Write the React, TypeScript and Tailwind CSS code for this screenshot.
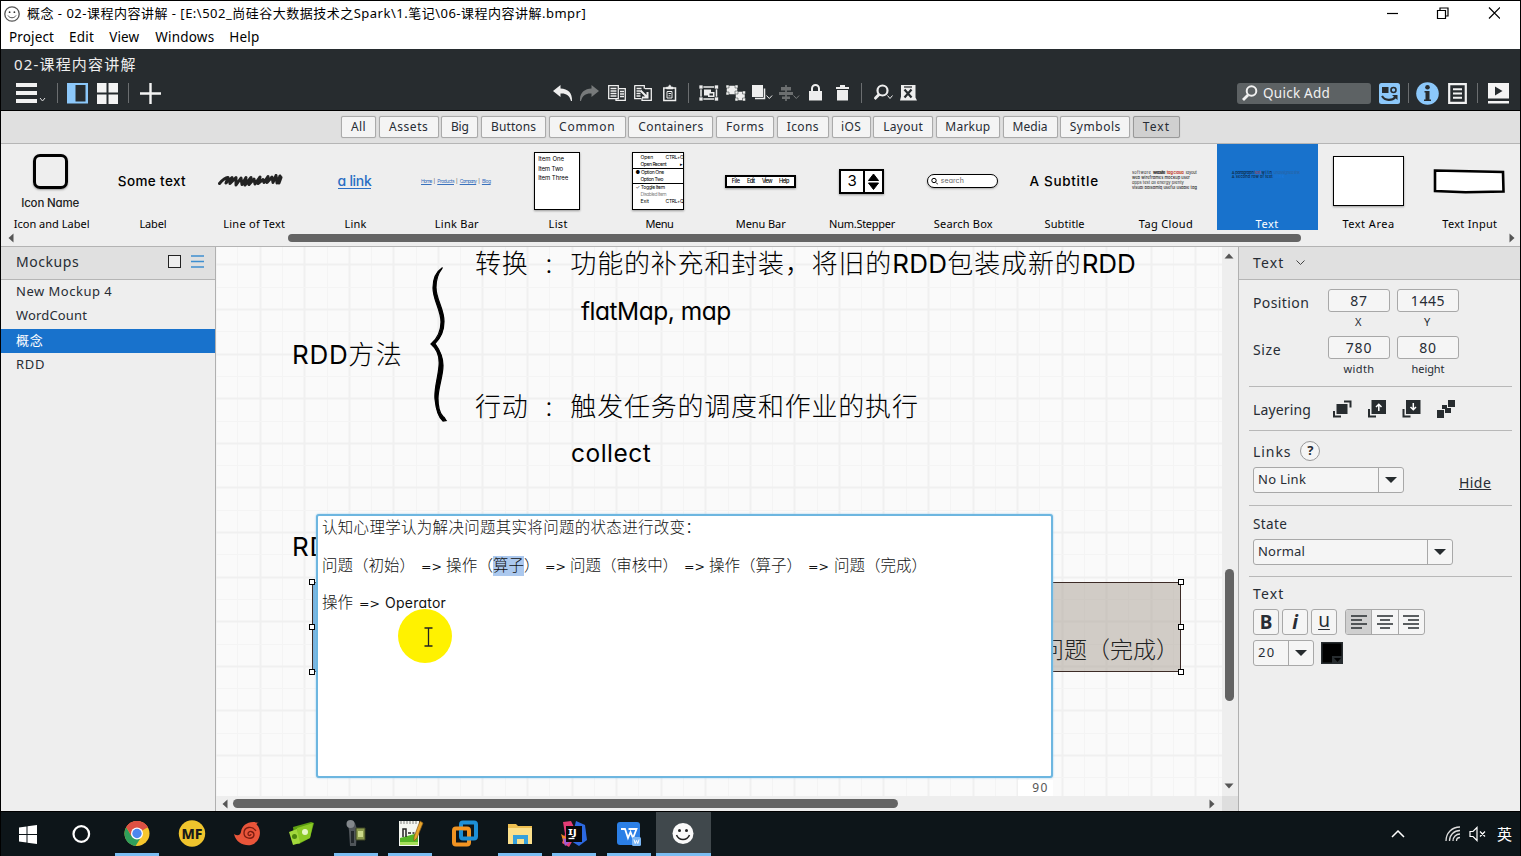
import React, { useLayoutEffect, useRef, useState } from "react";

/* Text run whose letter spacing is computed so that it fills the given width. */
function Run({ w, className = "", children }: { w: number; className?: string; children: string }) {
  const ref = useRef<HTMLSpanElement>(null);
  const [ls, setLs] = useState(0);
  useLayoutEffect(() => {
    const el = ref.current;
    if (!el) return;
    const natural = el.getBoundingClientRect().width - ls * children.length;
    setLs((w - natural) / Math.max(1, children.length - 0.5));
  }, [w, children]);
  return (
    <span ref={ref} className={`inline-block w-fit shrink-0 whitespace-pre ${className}`} style={{ letterSpacing: `${ls}px` }}>
      {children}
    </span>
  );
}

const sketch = "font-['Inter','Noto_Sans_CJK_SC',sans-serif] [font-feature-settings:'cv11','calt'_0]";

/* ---------- Title bar ---------- */
function TitleBar() {
  return (
    <div className="flex h-[48px] flex-col bg-white text-black">
      <div className="flex h-[26px] items-center">
        <svg width="16" height="16" viewBox="0 0 16 16" className="ml-[3px]" fill="none" stroke="#555">
          <circle cx="8" cy="8" r="7.2" strokeWidth="1.3" />
          <circle cx="5.6" cy="6.2" r=".9" fill="#333" stroke="none" />
          <circle cx="10.4" cy="6.2" r=".9" fill="#333" stroke="none" />
          <path d="M4 9.5c1.6 3 6.400 3 8 0" />
        </svg>
        <Run w={559} className="ml-[7px] text-[13px]">概念 - 02-课程内容讲解 - [E:\502_尚硅谷大数据技术之Spark\1.笔记\06-课程内容讲解.bmpr]</Run>
        <svg width="114" height="14" viewBox="0 0 114 14" className="mr-[20px] mb-[2px] ml-auto" fill="none" stroke="#000" strokeWidth="1.200">
          <path d="M1 7.500h11" />
          <path d="M51.500 4.500h8v8h-8zM54 4.500v-2.500h8v8h-2.500" />
          <path d="M103 1.500l11 11M114 1.500l-11 11" />
        </svg>
      </div>
      <div className="flex h-[21px] items-center pl-[8px] text-[13.500px]">
        <Run w={45}>Project</Run>
        <Run w={25} className="ml-[15px]">Edit</Run>
        <Run w={30} className="ml-[15px]">View</Run>
        <Run w={59} className="ml-[16px]">Windows</Run>
        <Run w={30} className="ml-[15px]">Help</Run>
      </div>
    </div>
  );
}

/* ---------- Dark tool bar ---------- */
const Sep = ({ className = "" }: { className?: string }) => <div className={`h-[20px] w-px bg-[#6b6e70] ${className}`} />;

function Tool({ w, className = "", children }: { w: number; className?: string; children: React.ReactNode }) {
  return (
    <svg width={w} height="18" viewBox={`0 0 ${w} 18`} className={`shrink-0 ${className}`} fill="none" stroke="#eee" strokeWidth="1.500">
      {children}
    </svg>
  );
}

function ToolBar() {
  return (
    <div className="flex h-[61px] flex-col bg-[#272c2f] text-white">
      <div className="flex h-[31px] items-center pl-[13px] text-[15px] text-[#eee]">
        <Run w={122}>02-课程内容讲解</Run>
      </div>
      <div className="flex h-[26px] items-center pl-[15px]">
        <svg width="30" height="21" viewBox="0 0 30 21">
          <path d="M0 0h21v4H0zM0 8h21v4H0zM0 16h21v4H0z" fill="#f1f1f1" />
          <path d="M24 15l2.500 3 2.500-3" fill="none" stroke="#ddd" />
        </svg>
        <Sep className="ml-[11px]" />
        <svg width="21" height="21" viewBox="0 0 21 21" className="ml-[9px]">
          <path d="M0 0h21v20.500H0z" fill="#8cc8fa" />
          <path d="M8.500 2h10v16.500h-10z" fill="#272c2f" />
        </svg>
        <svg width="21" height="21" viewBox="0 0 21 21" className="ml-[9px]">
          <path d="M0 0h9.500v9.500H0zM11.500 0H21v9.500h-9.500zM0 11.500h9.500V21H0zM11.500 11.500H21V21h-9.500z" fill="#f4f4f4" />
        </svg>
        <Sep className="ml-[10px]" />
        <svg width="21" height="21" viewBox="0 0 21 21" className="ml-[11px]">
          <path d="M9.300 0h2.400v9.300H21v2.400h-9.300V21H9.300v-9.300H0V9.300h9.300z" fill="#f4f4f4" />
        </svg>
        <div className="ml-[392px] flex items-center">
          <Tool w={20}><path d="M7.500 1L0 7l7.500 6V9.500c5-.5 9 1.500 10.500 7.500h1C19.500 9 15 4.800 7.500 4.500z" fill="#eee" stroke="none" /></Tool>
          <Tool w={20} className="ml-[7px]"><path d="M11.500 1L19 7l-7.500 6V9.500C6.500 9 2.500 11 1 17H0C-.5 9 4 4.800 11.500 4.500z" fill="#777a7b" stroke="none" /></Tool>
          <Tool w={18} className="ml-[8px]">
            <path d="M.7 1.700h9.600v13H.7zM11 4.700h6.300v11.600H8V15M2.500 4.500h6M2.500 7h6M2.500 9.500h6M2.500 12h6M12 7.500h4M12 10h4M12 12.500h4" strokeWidth="1.300" />
          </Tool>
          <Tool w={18} className="ml-[8px]">
            <path d="M.7 1.700h9.600v3M.7 1.200v13.500H7M2.500 4.500h5M2.500 7h4M2.500 9.500h4M2.500 12h4M11 4.700h6.300v11.600H8V14" strokeWidth="1.300" />
            <path d="M6.500 6.500l6 6M13.500 8v5.500H8" strokeWidth="2" />
          </Tool>
          <Tool w={14} className="ml-[11px]">
            <path d="M.8 4h11.700v12.500H.8z" /><path d="M3.500 5V3h2c0-2.500 2.500-2.500 2.500 0h2v2z" fill="#eee" strokeWidth=".5" />
            <path d="M4 7.500h5v6.500H4zM5.500 9.500h2.500M5.500 11.800h2" strokeWidth="1" />
          </Tool>
          <Sep className="ml-[11px]" />
          <Tool w={20} className="ml-[10px]">
            <path d="M2 3h15.500v12H2z" />
            <path d="M0 1h4v4H0zM15.500 1h4v4h-4zM0 13h4v4H0zM15.500 13h4v4h-4z" fill="#eee" stroke="#272c2f" strokeWidth=".7" />
            <path d="M5 5.500h7V8h3.500v5H9v-1.500H5z" fill="#eee" stroke="none" /><path d="M10.500 9.500h3.500v2h-3.500z" fill="#272c2f" stroke="none" />
          </Tool>
          <Tool w={20} className="ml-[7px]">
            <path d="M1.500 2.500h9v7h-9zM10.500 8.500h7.500v7h-7.500z" fill="#eee" />
            <path d="M0 1h3v3H0zM9 1h3v3H9zM0 8h3v3H0zM9 7h3v3H9zM16.500 7h3v3h-3zM9 14h3v3H9zM16.500 14h3v3h-3z" fill="#eee" stroke="#272c2f" strokeWidth=".5" />
          </Tool>
          <Tool w={21} className="ml-[6px]">
            <path d="M0 1h11v12H0z" fill="#eee" stroke="none" /><path d="M12.500 4.500v10H3" /><path d="M14.500 11.500l2.800 3 2.800-3" strokeWidth="1" />
          </Tool>
          <Tool w={21} className="ml-[6px]">
            <path d="M7 1v16" stroke="#777a7b" /><path d="M2 3h10v3.500H2zM0 8h14v3H0zM3 12.500h8V15H3z" fill="#6c6f70" stroke="none" /><path d="M14.500 11.500l2.800 3 2.800-3" strokeWidth="1" stroke="#777a7b" />
          </Tool>
          <Tool w={13} className="ml-[9px]">
            <path d="M3 8V4.500a3.500 3.500 0 017 0V8" strokeWidth="2" /><path d="M0 7h13v9.500H0z" fill="#eee" stroke="none" />
          </Tool>
          <Tool w={13} className="ml-[14px]">
            <path d="M0 3h4V1h5v2h4v2H0zM1 6h11v10.500H1z" fill="#eee" stroke="none" />
          </Tool>
          <Sep className="ml-[12px]" />
          <Tool w={20} className="ml-[12px]">
            <circle cx="8.500" cy="6.500" r="5" strokeWidth="2.200" /><path d="M5.500 10l-5 5" strokeWidth="3" /><path d="M13.500 11.500l2.500 3 2.500-3" strokeWidth="1" />
          </Tool>
          <Tool w={17} className="ml-[6px]">
            <path d="M1 1h14.500v12.500l1.500 3H0l1-4z" fill="#eee" stroke="none" /><path d="M4.500 5.500l7 8M11.500 5.500l-7 8" stroke="#272c2f" strokeWidth="2.200" /><path d="M4 3h8" stroke="#272c2f" strokeWidth="1.300" />
          </Tool>
        </div>
        <div className="mr-[11px] ml-auto flex items-center">
          <div className="flex h-[21px] w-[134px] items-center rounded-[3px] bg-[#5d6264] pl-[5px] text-[13.500px] text-[#f1f1f1]">
            <svg width="16" height="16" viewBox="0 0 16 16" fill="none" stroke="#f1f1f1"><circle cx="9.500" cy="6" r="4.800" strokeWidth="2" /><path d="M6 10l-5 5" strokeWidth="2.800" /></svg>
            <Run w={67} className="ml-[5px]">Quick Add</Run>
          </div>
          <svg width="21" height="21" viewBox="0 0 21 21" className="ml-[8px]">
            <rect width="21" height="21" rx="2.500" fill="#8cc8fa" />
            <path d="M3 4h6.500v6H3z" fill="#272c2f" /><circle cx="14.500" cy="7" r="2.500" fill="none" stroke="#272c2f" strokeWidth="1.600" />
            <path d="M3 13c3 5 10 5 13.500 1" fill="none" stroke="#272c2f" strokeWidth="2.200" /><path d="M13 12h5.500v5z" fill="#272c2f" />
          </svg>
          <Sep className="ml-[8px]" />
          <svg width="23" height="23" viewBox="0 0 23 23" className="ml-[7px]">
            <circle cx="11.500" cy="11.500" r="11.300" fill="#8cc8fa" /><circle cx="11.500" cy="5.200" r="2.300" fill="#272c2f" /><path d="M8.500 9h5v8.500h1.500v1.500h-7v-1.500h1.500v-7H8.500z" fill="#272c2f" />
          </svg>
          <svg width="19" height="21" viewBox="0 0 19 21" className="ml-[9px]">
            <path d="M1.200 1.200h16.600v18.600H1.200z" fill="none" stroke="#f1f1f1" strokeWidth="2.200" /><path d="M5 6.200h9M5 10.500h9M5 14.800h9" stroke="#f1f1f1" strokeWidth="2" />
          </svg>
          <Sep className="ml-[10px]" />
          <svg width="21" height="21" viewBox="0 0 21 21" className="ml-[10px]">
            <path d="M0 0h21v15.500H0zM0 18h21v2.500H0z" fill="#f4f4f4" /><path d="M7 3.500l7.500 4.500L7 12.500z" fill="#272c2f" />
          </svg>
        </div>
      </div>
    </div>
  );
}

/* ---------- Category buttons ---------- */
const categories: [string, string, number][] = [
  ["All", "w-[35px]", 15], ["Assets", "w-[60px]", 39], ["Big", "w-[37px]", 18], ["Buttons", "w-[65px]", 45],
  ["Common", "w-[77px]", 56], ["Containers", "w-[85px]", 65], ["Forms", "w-[58px]", 38], ["Icons", "w-[52px]", 32],
  ["iOS", "w-[39px]", 20], ["Layout", "w-[60px]", 40], ["Markup", "w-[64px]", 45], ["Media", "w-[55px]", 35],
  ["Symbols", "w-[70px]", 51], ["Text", "w-[47px]", 27],
];

function CategoryBar() {
  return (
    <div className="flex h-[34px] items-center justify-center gap-[2.700px] border-t border-b border-t-black border-b-[#b5b5b5] bg-[#e0e0e0] text-[12px] text-[#272c34]">
      {categories.map(([name, w, tw]) => (
        <div key={name} className={`flex h-[22px] items-center justify-center rounded-[2px] border shadow-[0_0_1px_#aaa] ${w} ${name === "Text" ? "border-[#999] bg-[#d0d0d0]" : "border-[#aaa] bg-[#f4f4f4]"}`}>
          <Run w={tw}>{name}</Run>
        </div>
      ))}
    </div>
  );
}

/* ---------- Component shelf ---------- */
const previews: Record<string, React.ReactNode> = {
  "Icon and Label": (
    <div className="mr-[3px] flex flex-col items-center pt-[2px]">
      <div className="size-[35px] rounded-[7px] border-[3px] border-black shadow-[0_1px_2px_#999]" />
      <Run w={58} className="mt-[6px] text-[11.500px] leading-[16px] font-medium text-[#222]">Icon Name</Run>
    </div>
  ),
  Label: <Run w={68} className="mr-[2px] text-[13.500px] font-medium text-black">Some text</Run>,
  "Line of Text": (
    <svg width="70" height="14" viewBox="0 0 70 14" className="-ml-[3px]" fill="none" stroke="#222" strokeWidth="3" strokeLinecap="round" strokeLinejoin="round">
      <path d="M1.500 9.500Q7 3 10 3.500L8 9l6-5.500-2 6 6-6v7.500l5-7 1 6.500 4-7-1 7.500 6-7.500-2 7 5-5.500 1 5 5-7-2 6.500 5-4 1 3 4-6-1 6 5-5.500 1 5.500 3-7 1 7.500 3-7-1 7 2-5.500" />
    </svg>
  ),
  Link: <Run w={34} className="mr-[2px] border-b border-[#2a6fc4] text-[14px] leading-[15px] font-medium text-[#2a6fc4]">a link</Run>,
  "Link Bar": (
    <div className="mr-[2px] flex gap-[2px] text-[5px] leading-[6px] text-[#3a72bd]">
      {["Home", "Products", "Company", "Blog"].map((t, i) => (
        <React.Fragment key={t}>{i > 0 && <span className="text-[#444]">|</span>}<Run w={[11, 17, 17, 9][i]} className="underline">{t}</Run></React.Fragment>
      ))}
    </div>
  ),
  List: (
    <div className="mr-[2px] flex h-[58px] w-[46px] flex-col border-[1.500px] border-black bg-white pt-[1px] pl-[3px] text-[6px] leading-[9.500px] text-black shadow-[0_1px_2px_#999]">
      <Run w={26}>Item One</Run><Run w={25}>Item Two</Run><Run w={30}>Item Three</Run>
    </div>
  ),
  Menu: (
    <div className="mr-[2px] flex h-[58px] w-[52px] flex-col border-[1.500px] border-black bg-white pt-px text-[5px] leading-[7px] text-black shadow-[0_1px_2px_#999]">
      <div className="flex justify-between pl-[7px]"><span>Open</span><Run w={18}>CTRL+O</Run></div>
      <div className="flex justify-between border-b border-black pl-[7px]"><Run w={26}>Open Recent</Run><span>▸</span></div>
      <div className="flex gap-px pl-[2px]"><span>●</span><Run w={23}>Option One</Run></div>
      <div className="flex border-b border-black pl-[7px]"><Run w={23}>Option Two</Run></div>
      <div className="flex gap-px pl-[2px]"><span>✓</span><Run w={24}>Toggle Item</Run></div>
      <div className="flex pl-[7px] text-[#888]"><Run w={26}>Disabled Item</Run></div>
      <div className="flex justify-between pl-[7px]"><span>Exit</span><Run w={18}>CTRL+Q</Run></div>
    </div>
  ),
  "Menu Bar": (
    <div className="mr-[1px] flex h-[13px] w-[71px] items-center justify-between border-2 border-black bg-white px-[5px] text-[5.500px] font-medium text-black shadow-[0_1px_2px_#999]">
      <Run w={8}>File</Run><Run w={8}>Edit</Run><Run w={10}>View</Run><Run w={10}>Help</Run>
    </div>
  ),
  "Num.Stepper": (
    <div className="mr-[1px] flex h-[25px] w-[45px] border-2 border-black bg-white shadow-[0_1px_2px_#999]">
      <div className="flex w-[24px] items-center justify-center border-r-2 border-black text-[15px] text-black">3</div>
      <svg width="17" height="21" viewBox="0 0 17 21"><path d="M8.500 3l5 6.500h-10zM8.500 18.500l5-6.500h-10z" stroke="#000" strokeLinejoin="round" /></svg>
    </div>
  ),
  "Search Box": (
    <div className="mr-[2px] flex h-[14px] w-[71px] items-center rounded-full border-[1.500px] border-black bg-white pl-[3px] text-[7px] text-[#666] shadow-[0_1px_2px_#aaa]">
      <svg width="7" height="8" viewBox="0 0 7 8" fill="none" stroke="#000"><circle cx="3" cy="3.500" r="2.200" /><path d="M5 5.500l2 2" /></svg>
      <Run w={23} className="ml-[3px]">search</Run>
    </div>
  ),
  Subtitle: <Run w={69} className="mr-[1px] text-[13.500px] font-medium text-black">A Subtitle</Run>,
  "Tag Cloud": (
    <div className="mr-[3px] flex flex-col text-[4px] leading-[4.900px] text-[#222]">
      <span className="flex gap-[2px]"><Run w={19}>software</Run><Run w={12} className="font-bold">website</Run><Run w={17} className="font-bold text-[#c43c2a]">tag cloud</Run><Run w={11}>layout</Run></span>
      <Run w={58} className="font-medium">web wireframes mockup user</Run>
      <Run w={52}>apps test all energy plenty</Run>
      <Run w={65} className="font-medium">visual balsamiq useful usable tag</Run>
    </div>
  ),
  Text: (
    <div className="mr-[3px] mb-[12px] flex flex-col text-[4px] leading-[4.500px] text-[#0c2540]">
      <span className="flex gap-[1px]"><Run w={22} className="font-medium">A paragraph</Run><Run w={6} className="text-[#a33]">text</Run><Run w={11} className="font-medium">with</Run><Run w={26} className="text-[#2b62a0]">unassigned link</Run></span>
      <span className="flex gap-[2px]"><Run w={41} className="font-medium">A second row of text</Run><Run w={10} className="text-[#1c7be0]">link</Run></span>
    </div>
  ),
  "Text Area": <div className="mr-[1px] h-[50px] w-[71px] border-[1.500px] border-black bg-white shadow-[0_1px_2px_#999]" />,
  "Text Input": (
    <svg width="72" height="27" viewBox="0 0 72 27" className="mr-[1px]"><path d="M2 2.500l68 1.500.5 19.500-38 .7L2 23z" fill="#fff" stroke="#000" strokeWidth="2.600" /></svg>
  ),
};
const labelWidths: Record<string, number> = {
  "Icon and Label": 76, Label: 27, "Line of Text": 62, Link: 22, "Link Bar": 44, List: 19, Menu: 28, "Menu Bar": 50,
  "Num.Stepper": 66, "Search Box": 59, Subtitle: 40, "Tag Cloud": 54, Text: 23, "Text Area": 52, "Text Input": 55,
};

function Shelf() {
  return (
    <div className="flex h-[103px] flex-col overflow-hidden border-b border-[#b3b3b3] bg-[#eee]">
      <div className="flex h-[86px] shrink-0">
        {Object.keys(previews).map((name) => (
          <div key={name} className={`flex w-[101.300px] shrink-0 flex-col items-center ${name === "Text" ? "bg-[#1872cc] text-white" : "text-black"}`}>
            <div className={`flex h-[74px] items-center justify-center ${sketch}`}>{previews[name]}</div>
            <Run w={labelWidths[name]} className="text-[11px] leading-[12px]">{name}</Run>
          </div>
        ))}
      </div>
      <div className="flex h-[16px] items-center justify-between pr-[5px] pl-[7px]">
        <svg width="6" height="10" viewBox="0 0 6 10"><path d="M5.500 .5v9L.5 5z" fill="#555" /></svg>
        <div className="ml-[66px] h-[8px] w-[1013px] rounded-full bg-[#646464]" />
        <svg width="6" height="10" viewBox="0 0 6 10"><path d="M.5 .5v9L5.500 5z" fill="#555" /></svg>
      </div>
    </div>
  );
}

/* ---------- Mockup list ---------- */
function Sidebar() {
  const rows: [string, number][] = [["New Mockup 4", 96], ["WordCount", 71], ["概念", 27], ["RDD", 29]];
  return (
    <div className="flex w-[215px] shrink-0 flex-col border-r border-[#b0b0b0] bg-[#eee] text-[#272c34]">
      <div className="flex h-[32.500px] items-center border-b border-[#b5b5b5] bg-[#e0e0e0] pb-[2px] pl-[15px] text-[14px]">
        <Run w={63}>Mockups</Run>
        <div className="ml-[89px] size-[13px] border-[1.500px] border-[#222] bg-[#eee]" />
        <svg width="13" height="13" viewBox="0 0 13 13" className="ml-[10px]" stroke="#3f8fd0" strokeWidth="1.300"><path d="M0 1h13M0 6.500h13M0 12h13" /></svg>
      </div>
      {rows.map(([name, w]) => (
        <div key={name} className={`flex h-[24.500px] items-center pb-[1px] pl-[15px] text-[13px] ${name === "概念" ? "bg-[#1872cc] text-white" : ""}`}>
          <Run w={w}>{name}</Run>
        </div>
      ))}
    </div>
  );
}

/* ---------- Canvas ---------- */
function Grid() {
  const xs = Array.from({ length: 46 }, (_, i) => ({ v: -0.8 + i * 22.275, major: i % 2 === 0 }));
  const ys = Array.from({ length: 26 }, (_, i) => ({ v: -4.900 + i * 22.300, major: i % 2 === 1 }));
  return (
    <svg width="1006" height="549" className="absolute inset-0">
      {xs.map((l) => <path key={`x${l.v}`} d={`M${Math.round(l.v) + 0.5} 0V549`} stroke={l.major ? "#f0f0f0" : "#f4f4f4"} strokeWidth={l.major ? 2 : 1} />)}
      {ys.map((l) => <path key={`y${l.v}`} d={`M0 ${Math.round(l.v) + 0.5}H1006`} stroke={l.major ? "#f0f0f0" : "#f4f4f4"} strokeWidth={l.major ? 2 : 1} />)}
    </svg>
  );
}

const Handle = ({ pos }: { pos: string }) => <div className={`absolute size-[6px] border border-black bg-white ${pos}`} />;
const Arrow = ({ className }: { className: string }) => <Run w={21} className={`pt-[2px] font-['DejaVu_Sans'] text-[12.500px] font-normal ${className}`}>{"=>"}</Run>;

function Editor() {
  return (
    <div className="absolute top-[267px] left-[100px] flex h-[264px] w-[737px] flex-col rounded-[3px] border-2 border-[#6db6e0] bg-white pl-[4px] font-['Inter','Noto_Sans_CJK_SC',sans-serif] text-[15.500px] font-light text-[#111] shadow-[0_0_2px_#8cc8ee] [font-feature-settings:'cv11']">
      <div className="flex h-[24px] items-center"><Run w={379}>认知心理学认为解决问题其实将问题的状态进行改变：</Run></div>
      <div className="mt-[14px] flex h-[24px] items-center">
        <Run w={93}>问题（初始）</Run>
        <Arrow className="ml-[6px]" />
        <Run w={47} className="ml-[4px]">操作（</Run>
        <Run w={31} className="h-[20px] bg-[#abc8ee] leading-[20px]">算子</Run>
        <Run w={16}>）</Run>
        <Arrow className="ml-[5px]" />
        <Run w={108} className="ml-[4px]">问题（审核中）</Run>
        <Arrow className="ml-[6px]" />
        <Run w={93} className="ml-[4px]">操作（算子）</Run>
        <Arrow className="ml-[6px]" />
        <Run w={93} className="ml-[5px]">问题（完成）</Run>
      </div>
      <div className="mt-[13px] flex h-[24px] items-center">
        <Run w={31}>操作</Run>
        <Arrow className="ml-[6px]" />
        <Run w={61} className="mb-[2px] ml-[5px] text-[14px] font-normal">Operator</Run>
      </div>
      <div className="absolute top-[93px] left-[80px] size-[54px] rounded-full bg-[#fff200]" />
      <svg width="9" height="20" viewBox="0 0 9 20" className="absolute top-[111px] left-[106px]" fill="none" stroke="#222" strokeWidth="1.300">
        <path d="M.5 1h8M.5 19h8M4.500 1v18" />
      </svg>
    </div>
  );
}

function Canvas() {
  return (
    <div className="relative h-[549px] w-[1006px] overflow-hidden bg-[#fafafa]">
      <Grid />
      <div className={`text-black ${sketch} text-[26px] leading-[32px]`}>
        <div className="absolute top-[1px] left-[259px] flex font-light">
          <Run w={53}>转换</Run><Run w={6} className="ml-[17px]">:</Run>
          <Run w={241} className="ml-[19px]">功能的补充和封装，</Run><Run w={80}>将旧的</Run>
          <Run w={55} className="font-normal">RDD</Run><Run w={134}>包装成新的</Run><Run w={54} className="font-normal">RDD</Run>
        </div>
        <Run w={150} className="absolute top-[48px] left-[365px] text-[24.500px] font-normal">flatMap, map</Run>
        <div className="absolute top-[92px] left-[76px] flex font-light"><Run w={56} className="font-normal">RDD</Run><Run w={54}>方法</Run></div>
        <div className="absolute top-[144px] left-[259px] flex font-light">
          <Run w={53}>行动</Run><Run w={6} className="ml-[17px]">:</Run><Run w={348} className="ml-[19px]">触发任务的调度和作业的执行</Run>
        </div>
        <Run w={80} className="absolute top-[190px] left-[355px] text-[24.500px] font-normal">collect</Run>
        <Run w={56} className="absolute top-[284px] left-[76px] font-normal">RDD</Run>
      </div>
      <svg width="20" height="156" viewBox="0 0 20 156" className="absolute top-[20px] left-[213px]">
        <path d="M13 1C7 5 4 12 4 21c0 12 8 22 8 34 0 10-3 16-10 22 6 5 9 12 8 22-1 12-5 23-4 33 1 10 3 18 8 22l3-.5c-1-1-1-3-3-4-4-4-5-10-5-18 0-11 5-22 5-33 0-9-3-15-8-22 6-6 9-12 9-22 0-13-8-22-8-34 0-8 2-14 6-19z" fill="#000" stroke="#000" strokeWidth="1.200" />
      </svg>
      <div className="absolute top-[335px] left-[96px] h-[90px] w-[869px] border border-[#3c2b26] bg-[#a89d9180]">
        <div className="absolute inset-y-0 left-0 w-[4px] bg-[#78b4df]" />
        <Run w={138} className={`absolute top-[50px] left-[728px] ${sketch} text-[23px] font-light text-[#222]`}>问题（完成）</Run>
        <Handle pos="-top-[4px] -left-[4px]" /><Handle pos="top-[41px] -left-[4px]" /><Handle pos="-bottom-[4px] -left-[4px]" />
        <Handle pos="-top-[4px] -right-[4px]" /><Handle pos="top-[41px] -right-[4px]" /><Handle pos="-bottom-[4px] -right-[4px]" />
      </div>
      <div className="absolute top-[533px] left-[802px] flex h-[16px] w-[35px] items-center justify-end bg-white pr-[4px] text-[12px] text-[#555]"><Run w={16}>90</Run></div>
      <Editor />
    </div>
  );
}

function Workspace() {
  return (
    <div className="flex w-[1022px] shrink-0 flex-col bg-[#eee]">
      <div className="flex h-[549px]">
        <Canvas />
        <div className="flex w-[16px] flex-col items-center pt-[6px] pr-[2px]">
          <svg width="10" height="6" viewBox="0 0 10 6"><path d="M.5 5.500h9L5 .5z" fill="#555" /></svg>
          <div className="mt-[310px] h-[132px] w-[9px] rounded-full bg-[#646464]" />
          <svg width="10" height="6" viewBox="0 0 10 6" className="mt-[82px]"><path d="M.5 .5h9L5 5.500z" fill="#555" /></svg>
        </div>
      </div>
      <div className="flex h-[15px] items-center pl-[6px]">
        <svg width="6" height="10" viewBox="0 0 6 10"><path d="M5.500 .5v9L.5 5z" fill="#555" /></svg>
        <div className="ml-[5px] h-[9px] w-[665px] rounded-full bg-[#646464]" />
        <svg width="6" height="10" viewBox="0 0 6 10" className="ml-[311px]"><path d="M.5 .5v9L5.500 5z" fill="#555" /></svg>
        <div className="ml-auto h-[15px] w-[16px] bg-[#dedede]" />
      </div>
    </div>
  );
}

/* ---------- Property inspector ---------- */
const Field = ({ value, w, label, lw, className = "" }: { value: string; w: number; label: string; lw: number; className?: string }) => (
  <div className={`flex w-[62px] flex-col items-center ${className}`}>
    <div className="flex h-[23px] w-full items-center justify-center rounded-[3px] border border-[#a8a8a8] bg-[#f5f5f5] text-[14px]"><Run w={w}>{value}</Run></div>
    <Run w={lw} className="mt-[3px] text-[11px] leading-[14px]">{label}</Run>
  </div>
);

const Select = ({ value, w, box }: { value: string; w: number; box: string }) => (
  <div className={`flex h-[26px] rounded-[3px] border border-[#a8a8a8] bg-[#f5f5f5] text-[13px] ${box}`}>
    <div className="flex flex-1 items-center pl-[4px]"><Run w={w}>{value}</Run></div>
    <div className="flex w-[25px] items-center justify-center border-l border-[#a8a8a8]">
      <svg width="12" height="6" viewBox="0 0 12 6"><path d="M0 0h12L6 6z" fill="#272c2f" /></svg>
    </div>
  </div>
);

const Rule = ({ className }: { className: string }) => <div className={`-ml-[4px] h-px w-[263px] bg-[#b8b8b8] ${className}`} />;
const alignPaths = ["M0 1h16M0 5h11M0 9h16M0 13h11", "M0 1h16M3 5h10M0 9h16M3 13h10", "M0 1h16M5 5h11M0 9h16M5 13h11"];

function Inspector() {
  return (
    <div className="flex flex-1 flex-col border-l border-[#b0b0b0] bg-[#eee] text-[14px] text-[#272c34]">
      <div className="flex h-[33px] shrink-0 items-center border-b border-[#b5b5b5] bg-[#e0e0e0] pb-[1px] pl-[14px]">
        <Run w={31}>Text</Run>
        <svg width="9" height="6" viewBox="0 0 9 6" className="ml-[11px]" fill="none" stroke="#444"><path d="M.5 .5l4 4 4-4" /></svg>
      </div>
      <div className="flex flex-col pl-[14px]">
        <div className="mt-[9px] flex h-[47px]">
          <div className="w-[75px] pt-[3px]"><Run w={56}>Position</Run></div><Field value="87" w={17} label="X" lw={8} /><Field value="1445" w={34} label="Y" lw={8} className="ml-[7px]" />
        </div>
        <div className="flex h-[50px]">
          <div className="w-[75px] pt-[3px]"><Run w={28}>Size</Run></div><Field value="780" w={26} label="width" lw={31} /><Field value="80" w={17} label="height" lw={33} className="ml-[7px]" />
        </div>
        <Rule className="" />
        <div className="flex h-[43px] items-center pt-[2px]">
          <Run w={58}>Layering</Run>
          <svg width="122" height="18" viewBox="0 0 122 18" className="mb-[1px] ml-[22px]" fill="#272c2f">
            <path d="M3.500 4h11v10h-11zM11 .5h7.500v7h-2v-5H11zM0 11h2v4.500h6v2H0z" />
            <path d="M38.500 0H53v14H38.500zM35 9h2v6.500h6v2h-8z" /><path d="M45.800 11V4.500M43 7l2.800-2.800L48.500 7" stroke="#fff" strokeWidth="1.500" fill="none" />
            <path d="M73 0h14.500v14H73zM69.500 9h2v6.500h6v2h-8z" /><path d="M80.300 3v6.500M77.500 7l2.800 2.800L83 7" stroke="#fff" strokeWidth="1.500" fill="none" />
            <path d="M115 0h7v7h-7zM109 5h5v3h4v5h-6V9h-3zM104 10h7v8h-7z" />
          </svg>
        </div>
        <Rule className="" />
        <div className="mt-[10px] flex h-[20px] items-center">
          <Run w={38}>Links</Run>
          <div className="ml-[9px] flex size-[20px] items-center justify-center rounded-full border border-[#999] bg-[#f5f5f5] text-[13px] font-bold">?</div>
        </div>
        <div className="mt-[6px] flex h-[26px]">
          <Select value="No Link" w={48} box="w-[151px]" />
          <Run w={32} className="mt-[5px] ml-[55px] underline">Hide</Run>
        </div>
        <Rule className="mt-[12px]" />
        <Run w={34} className="mt-[8px] text-[13.500px] leading-[20px]">State</Run>
        <div className="mt-[5px]"><Select value="Normal" w={47} box="w-[200px]" /></div>
        <Rule className="mt-[11px]" />
        <Run w={31} className="mt-[7px] leading-[20px]">Text</Run>
        <div className="mt-[5px] flex gap-[3px]">
          <div className="flex h-[26px] w-[26px] items-center justify-center rounded-[3px] border border-[#a8a8a8] bg-[#f5f5f5] text-[19px] font-bold">B</div>
          <div className="flex h-[26px] w-[26px] items-center justify-center rounded-[3px] border border-[#a8a8a8] bg-[#f5f5f5] text-[19px] font-bold italic">i</div>
          <div className="flex h-[26px] w-[26px] items-center justify-center rounded-[3px] border border-[#a8a8a8] bg-[#f5f5f5] pb-[4px] text-[19px] leading-none underline underline-offset-2">u</div>
          <div className="ml-[5px] flex h-[26px] w-[80px] overflow-hidden rounded-[3px] border border-[#a8a8a8] bg-[#f5f5f5]">
            {alignPaths.map((d, i) => (
              <div key={d} className={`flex flex-1 items-center justify-center ${i === 0 ? "bg-[#cfcfcf]" : "border-l border-[#a8a8a8]"}`}>
                <svg width="16" height="15" viewBox="0 0 16 15" stroke="#272c2f" strokeWidth="1.400"><path d={d} /></svg>
              </div>
            ))}
          </div>
        </div>
        <div className="mt-[5px] flex items-center">
          <Select value="20" w={17} box="w-[61px]" />
          <svg width="22" height="22" viewBox="0 0 22 22" className="ml-[7px]"><path d="M.8 .8h20.400v20.400H.8z" fill="#000" stroke="#272c2f" strokeWidth="1.600" /><path d="M11 14h10v7H11z" fill="#272c2f" /><path d="M13 16h7l-3.500 4z" fill="#000" /></svg>
        </div>
      </div>
    </div>
  );
}

/* ---------- Task bar ---------- */
const apps: { icon: React.ReactNode; open?: boolean; active?: boolean }[] = [
  { icon: <path d="M5 8.500l7.500-1v7.500H5zM13.500 7.300L23 6v9h-9.500zM5 16h7.500v7.500L5 22.500zM13.500 16H23v9l-9.500-1.300z" fill="#fff" /> },
  { icon: <circle cx="12.300" cy="15" r="7.800" fill="none" stroke="#fff" strokeWidth="2.200" /> },
  { open: true, icon: (<>
    <circle cx="14" cy="14.500" r="12.500" fill="#f6c62d" />
    <path d="M14 14.500L3.200 8.200A12.500 12.500 0 0124.800 8.200z" fill="#dd5144" /><path d="M3.200 8.200A12.500 12.500 0 0012.500 27l4.500-7-8.500-3z" fill="#2f9e5b" /><path d="M14 8.500h11a12.500 12.500 0 00-21.800-.3L8.500 17z" fill="#dd5144" />
    <circle cx="14" cy="14.500" r="6" fill="#fff" /><circle cx="14" cy="14.500" r="4.700" fill="#4d87ee" />
  </>) },
  { icon: (<><circle cx="14" cy="14.500" r="13.200" fill="#efc42d" /><text x="3.500" y="19.800" fontSize="14.500" fontWeight="800" fill="#1a1a1a" textLength="21" lengthAdjust="spacingAndGlyphs">MF</text></>) },
  { icon: (<><path d="M1 15c3 2 6 2 7-2C9 6 16 1 26 4c-2 0-3 1-2 2 5 5 4 17-6 20-7 1-15-2-17-11z" fill="#e9553a" /><path d="M23 12c-4-6-12-4-12 2s9 7 10 2c0-4-6-5-6-1 0 2 3 2 3 0" fill="none" stroke="#7a1c10" strokeWidth="1.300" /></>) },
  { icon: (<><path d="M6 8l18-5 3 1-4 15-11 6-4-1z" fill="#5d9e12" /><path d="M10 9l16-5-3 15-11 5z" fill="#8cc926" /><path d="M2 13l8-3 3 14-7 2z" fill="#a2d83c" /><circle cx="18" cy="13" r="3" fill="#e8f6c8" /><circle cx="7.500" cy="17.500" r="2.500" fill="#4b840d" /></>) },
  { open: true, icon: (<><path d="M6 4q4-4 7 0l2 6-1 17H8l-1-15z" fill="#50555a" /><circle cx="8.500" cy="5" r="4" fill="#83888c" /><path d="M9 12h3v12H9z" fill="#22272b" /><path d="M14 9h9v12h-9z" fill="#8b9a4c" stroke="#3d4424" /><path d="M16 12h5v6h-5z" fill="#cbd98a" /></>) },
  { open: true, icon: (<><path d="M3 2h20v25H3z" fill="#f5f7f2" /><path d="M4 19l18-5v12H4z" fill="#55b526" /><path d="M4 23h18v3H4z" fill="#a6e15a" /><path d="M5 2v3M8 2v3M11 2v3M14 2v3M17 2v3M20 2v3" stroke="#666" strokeWidth=".8" /><path d="M7 18v-8h3v8M12 14h3M16.500 14h2" stroke="#222" fill="none" strokeWidth="1.500" /><path d="M24 2l3 2-6 15-3 3v-4z" fill="#e7a52c" stroke="#8a5a18" strokeWidth=".7" /></>) },
  { icon: (<><rect x="10" y="3.500" width="15" height="16" rx="2" fill="none" stroke="#1d8fd6" strokeWidth="4" /><rect x="3" y="9.500" width="15" height="16" rx="2" fill="none" stroke="#f29422" strokeWidth="4" /><path d="M10 15v-3.500M16 19.500h4" stroke="#1d8fd6" strokeWidth="4" /></>) },
  { open: true, icon: (<><path d="M2 5h8l2 2h14v18H2z" fill="#eebf51" /><path d="M2 9h24v16H2z" fill="#fbe08c" /><path d="M7 25v-9h15v9h-4v-5h-7v5z" fill="#35a0dc" /></>) },
  { open: true, icon: (<><path d="M3 3l8-1 6 12-8 14-7-4 3-9z" fill="#e33d76" /><path d="M16 2l9 4 2 15-8 6-8-5z" fill="#2c69e0" /><path d="M1 15l5 3-2 7z" fill="#f08a24" /><path d="M3 19l8 3-6 5z" fill="#a25ad2" /><path d="M6 7h16v16H6z" fill="#080808" /><text x="8" y="15.500" fontSize="8.500" fontWeight="700" fill="#fff" textLength="9" lengthAdjust="spacingAndGlyphs">IJ</text><path d="M8.500 19.500h6" stroke="#fff" strokeWidth="1.300" /></>) },
  { open: true, icon: (<><rect x="2" y="3" width="23" height="23" rx="3" fill="#2b7fe6" /><path d="M6 10h4l3 9 2.500-6 2.500 6 3.500-9h-8" fill="none" stroke="#fff" strokeWidth="1.800" /><rect x="17" y="18" width="9" height="9" rx="1.500" fill="#79b5f4" /><path d="M19 20.500l1.200 4 1.300-3 1.300 3 1.200-4" fill="none" stroke="#fff" /></>) },
  { active: true, icon: (<><circle cx="14" cy="14.500" r="10.500" fill="#fafafa" /><circle cx="10.500" cy="11.500" r="1.500" fill="#222" /><circle cx="17.500" cy="11.500" r="1.500" fill="#222" /><path d="M7.500 16c2.500 6 10.500 6 13 0" fill="none" stroke="#222" strokeWidth="1.500" /></>) },
];

function TaskBar() {
  return (
    <div className="flex h-[45px] border-t border-black bg-[#0d1519]">
      {apps.map((a, i) => (
        <div key={i} className={`flex w-[54.600px] shrink-0 flex-col items-center justify-between pt-[7px] ${a.active ? "bg-[#40484c]" : ""}`}>
          <svg width="28" height="30" viewBox="0 0 28 30">{a.icon}</svg>
          <div className={`h-[3px] ${a.active ? "w-full bg-[#7abdf2]" : a.open ? "w-[44px] bg-[#7abdf2]" : ""}`} />
        </div>
      ))}
      <div className="mr-[8px] ml-auto flex items-center text-white">
        <svg width="14" height="8" viewBox="0 0 14 8" fill="none" stroke="#fff" strokeWidth="1.500"><path d="M1 7l6-6 6 6" /></svg>
        <svg width="16" height="16" viewBox="0 0 16 16" className="ml-[40px]" fill="none" stroke="#ddd" strokeWidth="1.300"><path d="M1 15C1 7 7 1 15 1M4.500 15C4.500 9 9 4.500 15 4.500M8 15c0-4 3-7 7-7M11.500 15c0-2 1.500-3.500 3.500-3.500" /></svg>
        <svg width="17" height="16" viewBox="0 0 17 16" className="ml-[8px]" fill="none" stroke="#fff" strokeWidth="1.200"><path d="M1 5.500h3l4-4v13l-4-4H1zM11 5.500l5 5M16 5.500l-5 5" /></svg>
        <span className="ml-[11px] text-[15px]">英</span>
      </div>
    </div>
  );
}

export default function App() {
  return (
    <div className="h-[856px] w-[1521px] overflow-hidden border-x border-t border-black bg-white font-['Noto_Sans','Noto_Sans_CJK_SC',sans-serif]">
      <TitleBar />
      <ToolBar />
      <CategoryBar />
      <Shelf />
      <div className="flex h-[564px]">
        <Sidebar />
        <Workspace />
        <Inspector />
      </div>
      <TaskBar />
    </div>
  );
}
